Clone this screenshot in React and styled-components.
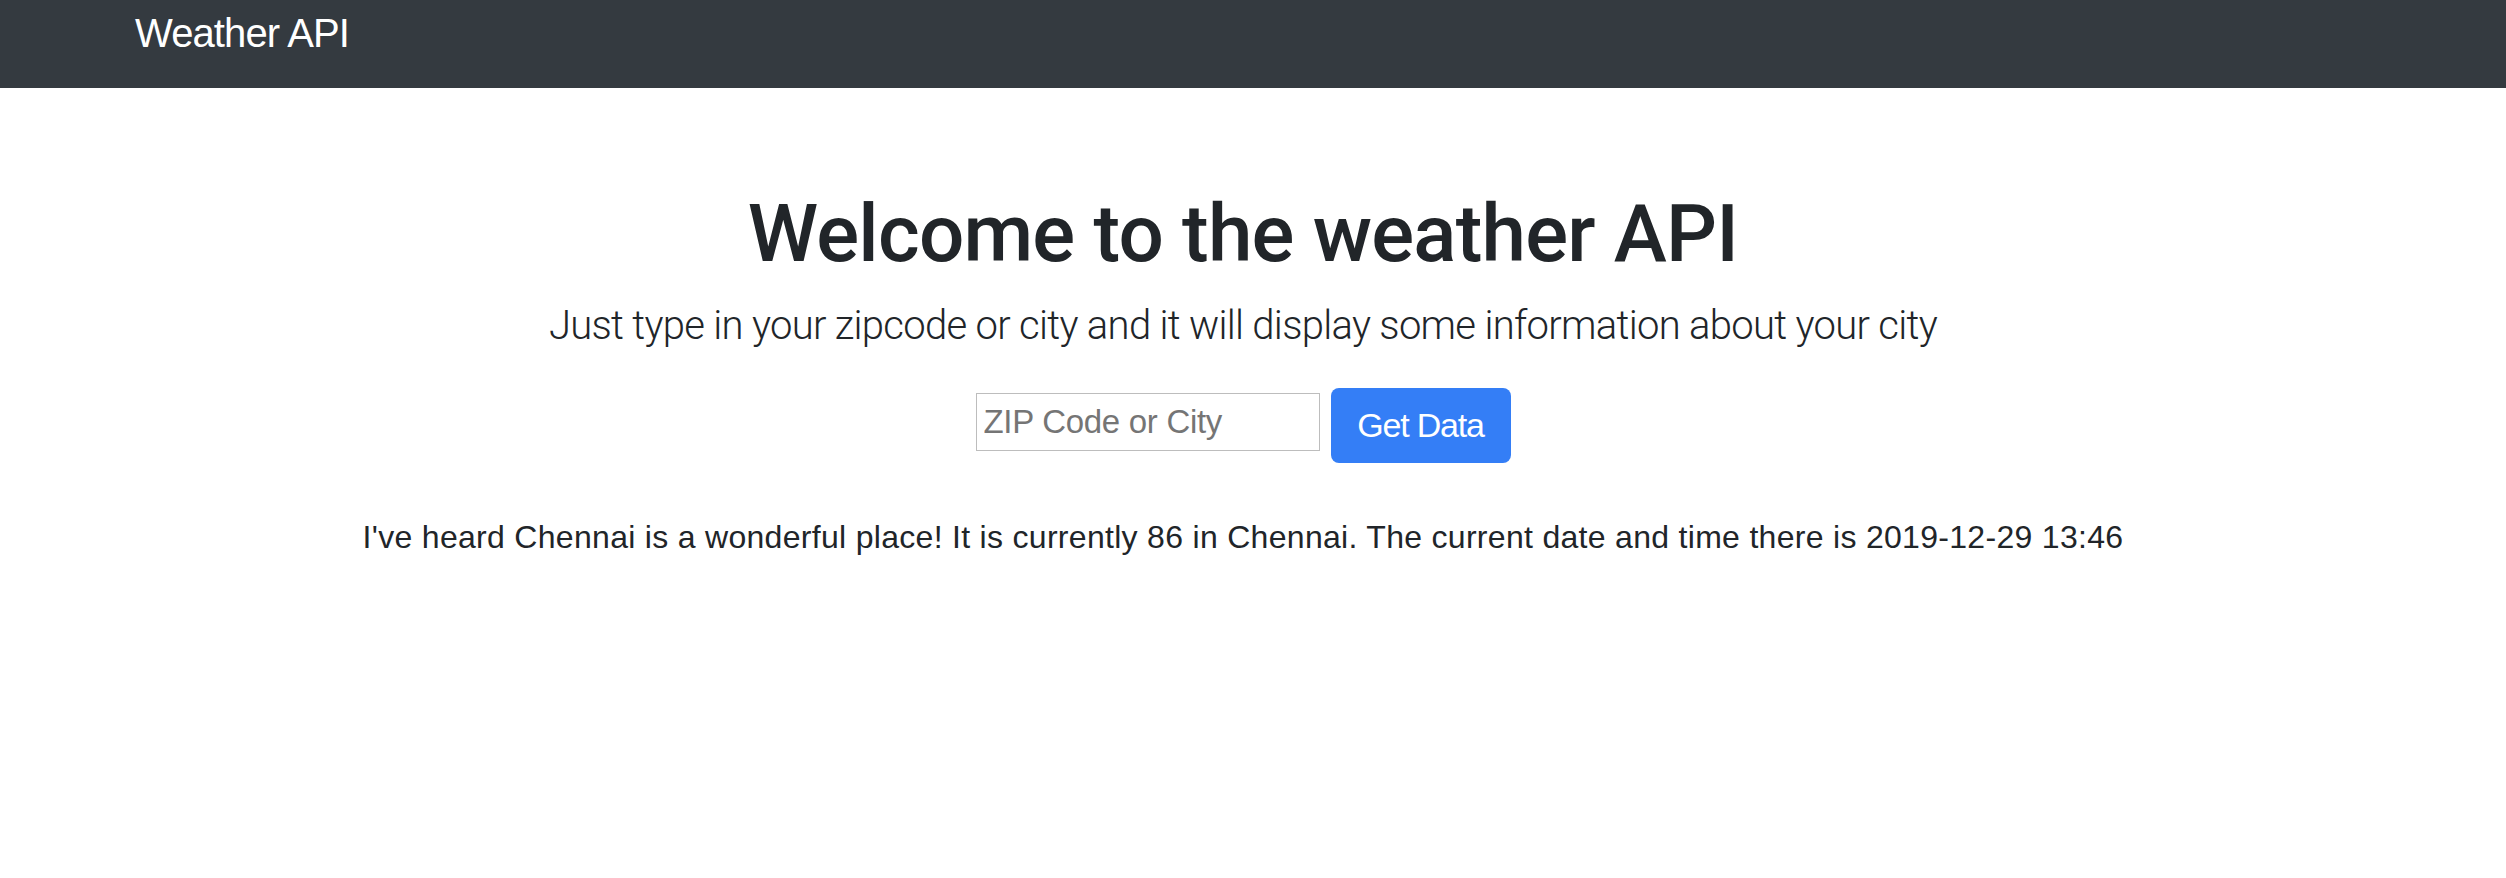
import React, { useState } from "react";
import styled, { createGlobalStyle } from "styled-components";

const GlobalStyle = createGlobalStyle`
  html, body {
    margin: 0;
    padding: 0;
    background: #fff;
  }
  body {
    font-family: "Liberation Sans", Arial, sans-serif;
    color: #212529;
  }
`;

export default function App() {
  const [zip, setZip] = useState("");

  return (
    <>
      <GlobalStyle />
      <Navbar>
        <Brand>Weather API</Brand>
      </Navbar>
      <Main>
        <Title>Welcome to the weather API</Title>
        <Lead>Just type in your zipcode or city and it will display some information about your city</Lead>
        <SearchRow>
          <ZipInput
            placeholder="ZIP Code or City"
            value={zip}
            onChange={(e) => setZip(e.target.value)}
          />
          <GetButton type="button">Get Data</GetButton>
        </SearchRow>
        <Result>
          I've heard Chennai is a wonderful place! It is currently 86 in Chennai. The current date and time there is 2019-12-29 13:46
        </Result>
      </Main>
    </>
  );
}

const Navbar = styled.nav`
  height: 88px;
  box-sizing: border-box;
  background: #343a40;
  padding: 13px 0 0 135px;
`;

const Brand = styled.a`
  display: block;
  color: #fff;
  font-size: 40px;
  line-height: 40px;
  letter-spacing: -0.9px;
`;

const Main = styled.main`
  display: flex;
  flex-direction: column;
  align-items: center;
  padding: 98px 20px 0 0;
  text-align: center;
`;

const Title = styled.h1`
  margin: 0;
  font-family: Roboto, "Liberation Sans", sans-serif;
  font-size: 80px;
  line-height: 96px;
  font-weight: 500;
  letter-spacing: -0.8px;
  color: #212529;
`;

const Lead = styled.p`
  margin: 20px 0 0;
  font-family: Roboto, "Liberation Sans", sans-serif;
  font-weight: 300;
  font-size: 40px;
  line-height: 48px;
  letter-spacing: -0.7px;
  color: #212529;
`;

const SearchRow = styled.form`
  display: flex;
  align-items: flex-start;
  gap: 11px;
  margin-top: 38px;
`;

const ZipInput = styled.input`
  box-sizing: border-box;
  width: 344px;
  height: 58px;
  margin-top: 5px;
  padding: 0 7px;
  border: 1px solid #bdbdbd;
  border-radius: 0;
  font-family: "Liberation Sans", Arial, sans-serif;
  font-size: 33px;
  color: #212529;
  outline: none;
  &::placeholder {
    color: #757575;
    letter-spacing: -0.3px;
  }
`;

const GetButton = styled.button`
  box-sizing: border-box;
  width: 180px;
  height: 75px;
  border: none;
  border-radius: 8px;
  background: #347ef6;
  color: #fff;
  font-family: "Liberation Sans", Arial, sans-serif;
  font-size: 34px;
  letter-spacing: -1.2px;
  cursor: pointer;
`;

const Result = styled.p`
  margin: 50px 0 0;
  font-size: 32px;
  line-height: 48px;
  letter-spacing: 0.3px;
  color: #212529;
`;
